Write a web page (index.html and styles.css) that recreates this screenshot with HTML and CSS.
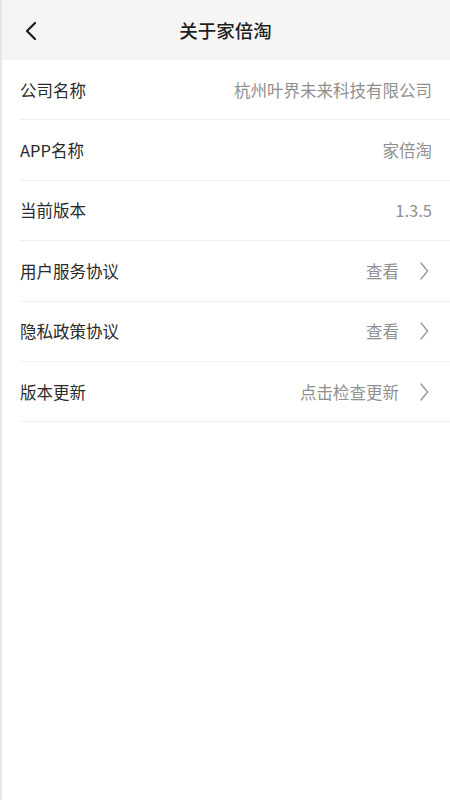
FILE: index.html
```html
<!DOCTYPE html>
<html lang="zh">
<head>
<meta charset="utf-8">
<link rel="stylesheet" href="styles.css">
</head>
<body>
<div class="page">
  <header class="nav">
    <span class="back">
      <svg width="14" height="20" viewBox="0 0 14 20"><path d="M11 2 L3 10 L11 18" fill="none" stroke="#1a1a1a" stroke-width="2.2" stroke-linecap="round" stroke-linejoin="round"/></svg>
    </span>
    <h1 class="title">关于家倍淘</h1>
  </header>
  <ul class="list">
    <li class="row"><span class="label">公司名称</span><span class="value">杭州叶界未来科技有限公司</span></li>
    <li class="row"><span class="label">APP名称</span><span class="value">家倍淘</span></li>
    <li class="row"><span class="label">当前版本</span><span class="value">1.3.5</span></li>
    <li class="row"><span class="label">用户服务协议</span><span class="value">查看</span><span class="arrow"><svg width="10" height="18" viewBox="0 0 10 18"><path d="M2 1 L8.5 9 L2 17" fill="none" stroke="#9a9a9a" stroke-width="1.4" stroke-linecap="round" stroke-linejoin="round"/></svg></span></li>
    <li class="row"><span class="label">隐私政策协议</span><span class="value">查看</span><span class="arrow"><svg width="10" height="18" viewBox="0 0 10 18"><path d="M2 1 L8.5 9 L2 17" fill="none" stroke="#9a9a9a" stroke-width="1.4" stroke-linecap="round" stroke-linejoin="round"/></svg></span></li>
    <li class="row"><span class="label">版本更新</span><span class="value">点击检查更新</span><span class="arrow"><svg width="10" height="18" viewBox="0 0 10 18"><path d="M2 1 L8.5 9 L2 17" fill="none" stroke="#9a9a9a" stroke-width="1.4" stroke-linecap="round" stroke-linejoin="round"/></svg></span></li>
  </ul>
</div>
</body>
</html>
```
FILE: styles.css
```css
* { box-sizing: border-box; }
html, body {
  margin: 0;
  padding: 0;
  background: #ffffff;
}
body {
  font-family: "Noto Sans CJK SC", "Noto Sans", sans-serif;
}
.page {
  min-height: 800px;
  border-left: 2px solid #e6e6e6;
  background: #fff;
}
.nav {
  height: 60px;
  background: #f5f5f5;
  display: flex;
  align-items: center;
  justify-content: center;
  position: relative;
}
.back {
  position: absolute;
  left: 22px;
  top: 21px;
  display: flex;
}
.title {
  margin: 0;
  font-size: 18.5px;
  font-weight: 500;
  color: #1e1e1e;
  margin-left: -1px;
}
.list {
  list-style: none;
  margin: 0;
  padding: 0 0 0 18px;
}
.row {
  height: 60.4px;
  display: flex;
  align-items: center;
  border-bottom: 1px solid #efefef;
  padding-right: 18px;
}
.label {
  font-size: 16.5px;
  color: #2a2a2a;
  flex: 1;
}
.value {
  font-size: 16.5px;
  color: #8f8f8f;
}
.arrow {
  display: flex;
  margin-left: 20px;
  margin-right: 3px;
}
```
